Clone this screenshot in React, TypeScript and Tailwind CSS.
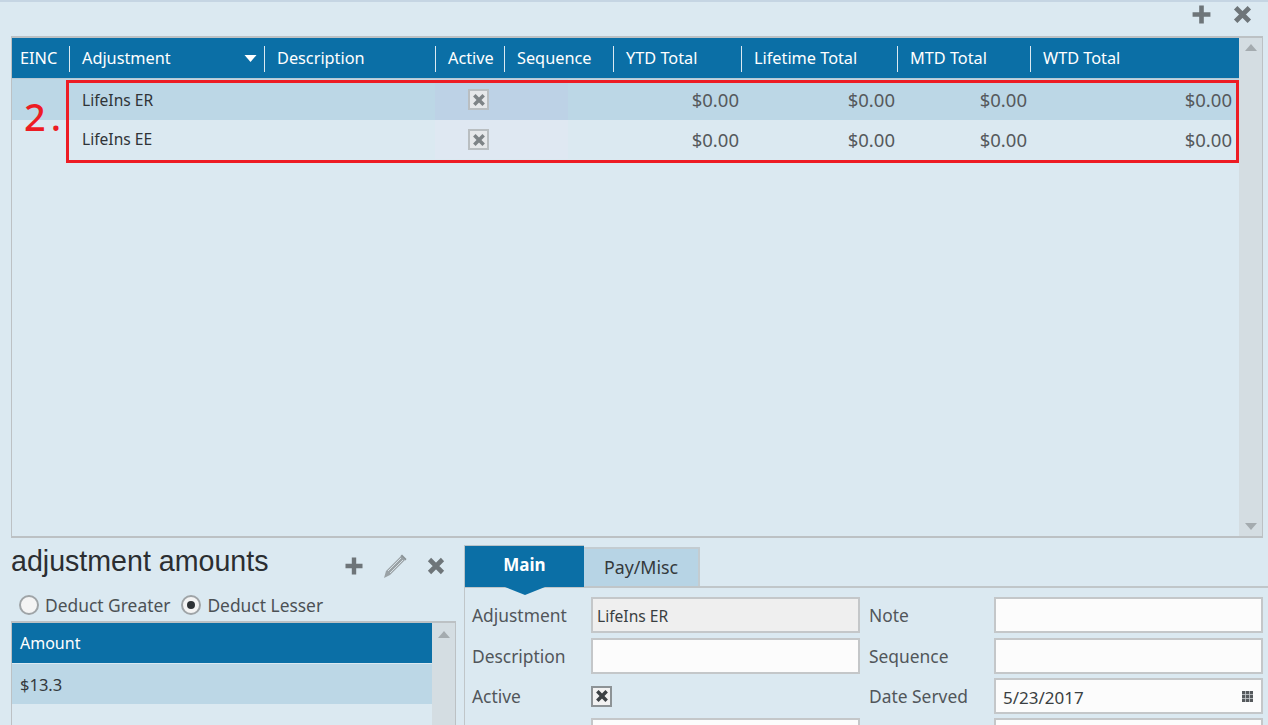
const font = { fontFamily: '"Noto Sans", "Open Sans", sans-serif' };

const headers = [
  { label: "EINC", width: "w-[57px]", first: true },
  { label: "Adjustment", width: "w-[195px]", sort: true },
  { label: "Description", width: "w-[171px]" },
  { label: "Active", width: "w-[69px]" },
  { label: "Sequence", width: "w-[109px]" },
  { label: "YTD Total", width: "w-[128px]" },
  { label: "Lifetime Total", width: "w-[156px]" },
  { label: "MTD Total", width: "w-[133px]" },
  { label: "WTD Total", width: "w-[209px]" },
];

function PlusIcon({ className }: { className?: string }) {
  return (
    <svg viewBox="0 0 20 20" className={className}>
      <path d="M10 1.500v17M1.500 10h17" stroke="#6e7579" strokeWidth="4.4" fill="none" />
    </svg>
  );
}

function CrossIcon({ className }: { className?: string }) {
  return (
    <svg viewBox="0 0 20 20" className={className}>
      <path d="M3.500 3.500l13 13M16.500 3.500l-13 13" stroke="#6e7579" strokeWidth="4.6" fill="none" />
    </svg>
  );
}

function PencilIcon({ className }: { className?: string }) {
  return (
    <svg viewBox="0 0 26 26" className={className}>
      <path d="M2 25l2-7L19 3l4 4L8 22z" fill="#9aa2a6" />
      <path d="M6 18l13-13M8 20L21 7" stroke="#d5dfe5" strokeWidth="1" fill="none" />
      <path d="M20 1.500l4.500 4.500-1 1.500L18.500 3z" fill="#8a9296" />
    </svg>
  );
}

function Checkbox({ dark }: { dark?: boolean }) {
  return (
    <div
      className={`flex items-center justify-center w-[21px] h-[21px] border-2 ${
        dark ? "border-[#8d9396] bg-[#f2f2f2]" : "border-[#b9bec1] bg-[#e6e8ea]"
      }`}
    >
      <svg viewBox="0 0 12 12" className="w-[14px] h-[14px]">
        <path
          d="M2 2l8 8M10 2l-8 8"
          stroke={dark ? "#3c4144" : "#7d8386"}
          strokeWidth="3"
          fill="none"
        />
      </svg>
    </div>
  );
}

function GridRow({ label, selected }: { label: string; selected?: boolean }) {
  const amount = "text-right text-[18.5px] text-[#55595c]";
  return (
    <div className={`flex items-center ${selected ? "bg-[#bcd7e6] h-[41px]" : "h-[39px]"}`}>
      <div className="w-[70px] shrink-0" />
      <div className={`w-[353px] shrink-0 text-[15.6px] text-[#2f3438] ${selected ? "pt-[2px]" : ""}`}>
        {label}
      </div>
      <div
        className={`flex items-center justify-center w-[133px] shrink-0 h-full pr-[46px] ${
          selected ? "bg-[#bdd2e6]" : "bg-[#dfe8f2]"
        }`}
      >
        <Checkbox />
      </div>
      <div className={`w-[171px] shrink-0 ${amount}`}>$0.00</div>
      <div className={`w-[156px] shrink-0 ${amount}`}>$0.00</div>
      <div className={`w-[132px] shrink-0 ${amount}`}>$0.00</div>
      <div className={`w-[205px] shrink-0 ${amount}`}>$0.00</div>
    </div>
  );
}

function FormInput({ value, disabled, date }: { value?: string; disabled?: boolean; date?: boolean }) {
  return (
    <div
      className={`flex items-center justify-between h-[36px] border-2 border-[#c4c7c9] pr-[8px] text-[#3a3f42] ${
        disabled ? "bg-[#efefef]" : "bg-[#fcfcfc]"
      } ${date ? "pl-[7px] text-[17px]" : "pl-[4px] text-[15.6px]"}`}
    >
      <span className="pt-[3px]">{value}</span>
      {date && (
        <svg viewBox="0 0 11 11" className="w-[11px] h-[11px]">
          <rect width="11" height="11" fill="#55595c" />
          <path d="M3.500 0v11M7.500 0v11M0 3.500h11M0 7.500h11" stroke="#c9cdcf" strokeWidth="0.8" />
        </svg>
      )}
    </div>
  );
}

function FormLabel({ children }: { children: string }) {
  return <div className="flex items-center h-[36px] text-[17.4px] text-[#51565a]">{children}</div>;
}

function Radio({ checked }: { checked?: boolean }) {
  return (
    <div className="flex items-center justify-center w-[20px] h-[20px] rounded-full border-2 border-[#9fa4a7] bg-[#f4f4f4]">
      {checked && <div className="w-[8px] h-[8px] rounded-full bg-[#2f3336]" />}
    </div>
  );
}

export default function App() {
  return (
    <div
      style={font}
      className="w-[1268px] h-[725px] overflow-hidden bg-[#dbe9f1] border-t-2 border-[#c5d5e3]"
    >
      {/* top toolbar */}
      <div className="flex items-center justify-end gap-[20px] h-[34px] pr-[15px] pb-[9px]">
        <PlusIcon className="w-[21px] h-[21px]" />
        <CrossIcon className="w-[21px] h-[21px]" />
      </div>

      {/* adjustments grid */}
      <div className="relative flex ml-[11px] mr-[5px] h-[502px] border-2 border-[#bcc1c4] border-l-[1px] border-r-0">
        <div className="flex-1 min-w-0">
          <div className="flex items-center h-[40px] pt-[1px] bg-[#0b6fa6] text-white text-[16.3px]">
            {headers.map((h) => (
              <div key={h.label} className={`${h.width} shrink-0 flex items-center h-[26px]`}>
                <div
                  className={`flex items-center justify-between w-full h-full pr-[7px] ${
                    h.first ? "pl-[8px]" : "pl-[12px] border-l border-[#dbe9f1]"
                  }`}
                >
                  <span className="whitespace-nowrap">{h.label}</span>
                  {h.sort && (
                    <svg viewBox="0 0 12 7" className="w-[13px] h-[7px]">
                      <path d="M0 0h12L6 7z" fill="#ffffff" />
                    </svg>
                  )}
                </div>
              </div>
            ))}
          </div>
          <div className="border-t border-[#b7c9d4]">
            <GridRow label="LifeIns ER" selected />
            <GridRow label="LifeIns EE" />
          </div>
        </div>
        <div className="flex flex-col items-center justify-between w-[24px] shrink-0 bg-[#d4dde2] py-[6px] border-r border-[#bcc1c4]">
          <svg viewBox="0 0 12 7" className="w-[12px] h-[7px]">
            <path d="M6 0l6 7H0z" fill="#a4abaf" />
          </svg>
          <svg viewBox="0 0 12 7" className="w-[12px] h-[7px]">
            <path d="M0 0h12L6 7z" fill="#a4abaf" />
          </svg>
        </div>

        {/* red callout */}
        <div className="absolute left-[54px] top-[42px] w-[1173px] h-[83px] border-[3px] border-[#ed1c24]" />
        <div className="absolute left-[12px] top-[56px] text-[38px] font-medium leading-[44px] text-[#ed1c24] tracking-[5px]">
          2.
        </div>
      </div>

      {/* bottom panels */}
      <div className="flex pl-[11px] gap-[8px]">
        <div className="w-[445px] shrink-0">
          <div className="flex items-center justify-between h-[47px] pr-[10px] pt-[8px]">
            <span
              className="text-[28.600px] text-[#2b2e31] pb-[8px]"
              style={{ fontFamily: '"Liberation Sans", Arial, sans-serif' }}
            >
              adjustment amounts
            </span>
            <div className="flex items-center gap-[20px]">
              <PlusIcon className="w-[20px] h-[20px]" />
              <PencilIcon className="w-[26px] h-[26px] -mx-[2px]" />
              <CrossIcon className="w-[20px] h-[20px]" />
            </div>
          </div>
          <div className="flex items-center h-[36px] pl-[8px] text-[17.4px] text-[#4c5155] pt-[4px]">
            <Radio />
            <span className="ml-[6px]">Deduct Greater</span>
            <div className="ml-[11px]">
              <Radio checked />
            </div>
            <span className="ml-[6px]">Deduct Lesser</span>
          </div>
          <div className="flex h-[110px] border-t-2 border-l border-r border-[#bcc1c4]">
            <div className="flex-1 min-w-0">
              <div className="flex items-center h-[40px] bg-[#0b6fa6] pl-[8px] text-[16px] text-white">
                Amount
              </div>
              <div className="flex items-center h-[40px] mt-[1px] pt-[2px] bg-[#bcd7e6] pl-[8px] text-[16.5px] text-[#34393c]">
                $13.3
              </div>
            </div>
            <div className="flex justify-center w-[23px] shrink-0 bg-[#d4dde2] pt-[8px]">
              <svg viewBox="0 0 12 7" className="w-[12px] h-[7px]">
                <path d="M6 0l6 7H0z" fill="#a4abaf" />
              </svg>
            </div>
          </div>
        </div>

        <div className="flex-1 min-w-0 pt-[7px]">
          <div className="flex items-end h-[43px] border-b-2 border-[#c0c6c9]">
            <div className="relative flex items-center justify-center w-[120px] h-[42px] -mb-[1px] pb-[4px] bg-[#0b6fa6] border-t border-l border-[#b9c3c9] text-[17px] font-bold text-white">
              Main
              <div className="absolute left-[40px] top-full w-0 h-0 border-l-[20px] border-r-[20px] border-t-[8px] border-l-transparent border-r-transparent border-t-[#0b6fa6]" />
            </div>
            <div className="flex items-center justify-center w-[116px] h-[39px] bg-[#b7d4e5] border-t-2 border-r-2 border-[#c3ccd1] text-[17.800px] text-[#34393c]">
              Pay/Misc
            </div>
          </div>
          <div className="grid grid-cols-[119px_269px_134px_269px] grid-rows-[38px_37px_37px_37px] gap-y-[3px] pt-[9px] pl-[7px] h-[170px] border-l border-[#c0c6c9]">
            <FormLabel>Adjustment</FormLabel>
            <FormInput value="LifeIns ER" disabled />
            <div className="pl-[9px]">
              <FormLabel>Note</FormLabel>
            </div>
            <FormInput />
            <FormLabel>Description</FormLabel>
            <FormInput />
            <div className="pl-[9px]">
              <FormLabel>Sequence</FormLabel>
            </div>
            <FormInput />
            <FormLabel>Active</FormLabel>
            <div className="flex items-center h-[36px]">
              <Checkbox dark />
            </div>
            <div className="pl-[9px]">
              <FormLabel>Date Served</FormLabel>
            </div>
            <FormInput value="5/23/2017" date />
            <div />
            <FormInput />
            <div />
            <FormInput />
          </div>
        </div>
      </div>
    </div>
  );
}
